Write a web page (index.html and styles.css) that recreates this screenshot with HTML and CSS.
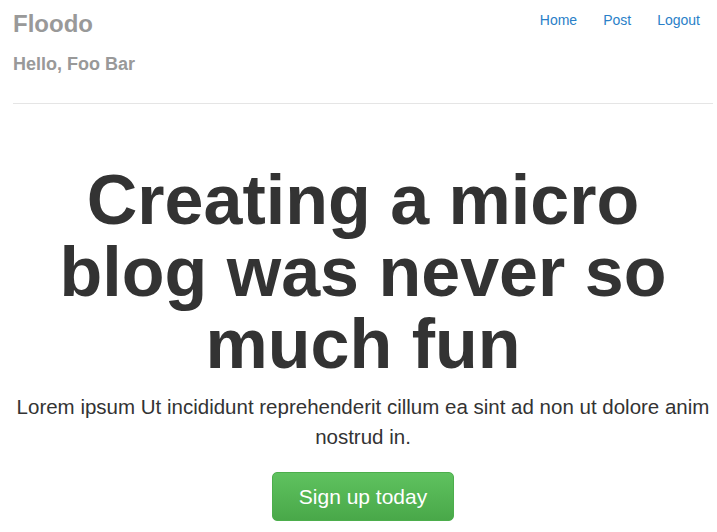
FILE: index.html
```html
<!DOCTYPE html>
<html>
<head>
<meta charset="utf-8">
<link rel="stylesheet" href="styles.css">
</head>
<body>
<div class="container">
  <div class="header">
    <div class="brand">
      <h3 class="logo">Floodo</h3>
      <h4 class="hello">Hello, Foo Bar</h4>
    </div>
    <ul class="nav">
      <li><a href="#">Home</a></li>
      <li><a href="#">Post</a></li>
      <li><a href="#">Logout</a></li>
    </ul>
  </div>
  <div class="jumbotron">
    <h1 class="title">Creating a micro<br>blog was never so<br>much fun</h1>
    <p class="lead">Lorem ipsum Ut incididunt reprehenderit cillum ea sint ad non ut dolore anim nostrud in.</p>
    <a class="btn" href="#">Sign up today</a>
  </div>
</div>
</body>
</html>
```
FILE: styles.css
```css
html, body {
  margin: 0;
  padding: 0;
  background: #fff;
}
body {
  font-family: "Liberation Sans", Arial, sans-serif;
  color: #333;
}
.container {
  padding: 0 4px 0 13px;
}
.header {
  display: flex;
  justify-content: space-between;
  align-items: flex-start;
  border-bottom: 1px solid #e5e5e5;
  height: 104px;
  box-sizing: border-box;
}
.logo {
  margin: 10px 0 0 0;
  font-size: 24px;
  line-height: 28px;
  font-weight: bold;
  color: #999;
}
.hello {
  margin: 16px 0 0 0;
  font-size: 18px;
  line-height: 20px;
  font-weight: bold;
  color: #999;
}
.nav {
  list-style: none;
  display: flex;
  margin: 10px 13px 0 0;
  padding: 0;
}
.nav li a {
  display: block;
  margin-left: 26px;
  font-size: 14px;
  line-height: 20px;
  color: #2a7fc8;
  text-decoration: none;
}
.jumbotron {
  text-align: center;
  padding-top: 60px;
}
.title {
  margin: 0;
  font-size: 70px;
  line-height: 72px;
  font-weight: bold;
  color: #333;
}
.lead {
  margin: 12px 0 0 0;
  font-size: 20.5px;
  line-height: 30px;
  color: #333;
}
.btn {
  display: inline-block;
  margin-top: 20px;
  width: 182px;
  height: 49px;
  box-sizing: border-box;
  border: 1px solid #4cae4c;
  border-radius: 5px;
  background: linear-gradient(#5fc25f, #49a849);
  color: #fff;
  font-size: 21px;
  line-height: 47px;
  text-decoration: none;
}
```
